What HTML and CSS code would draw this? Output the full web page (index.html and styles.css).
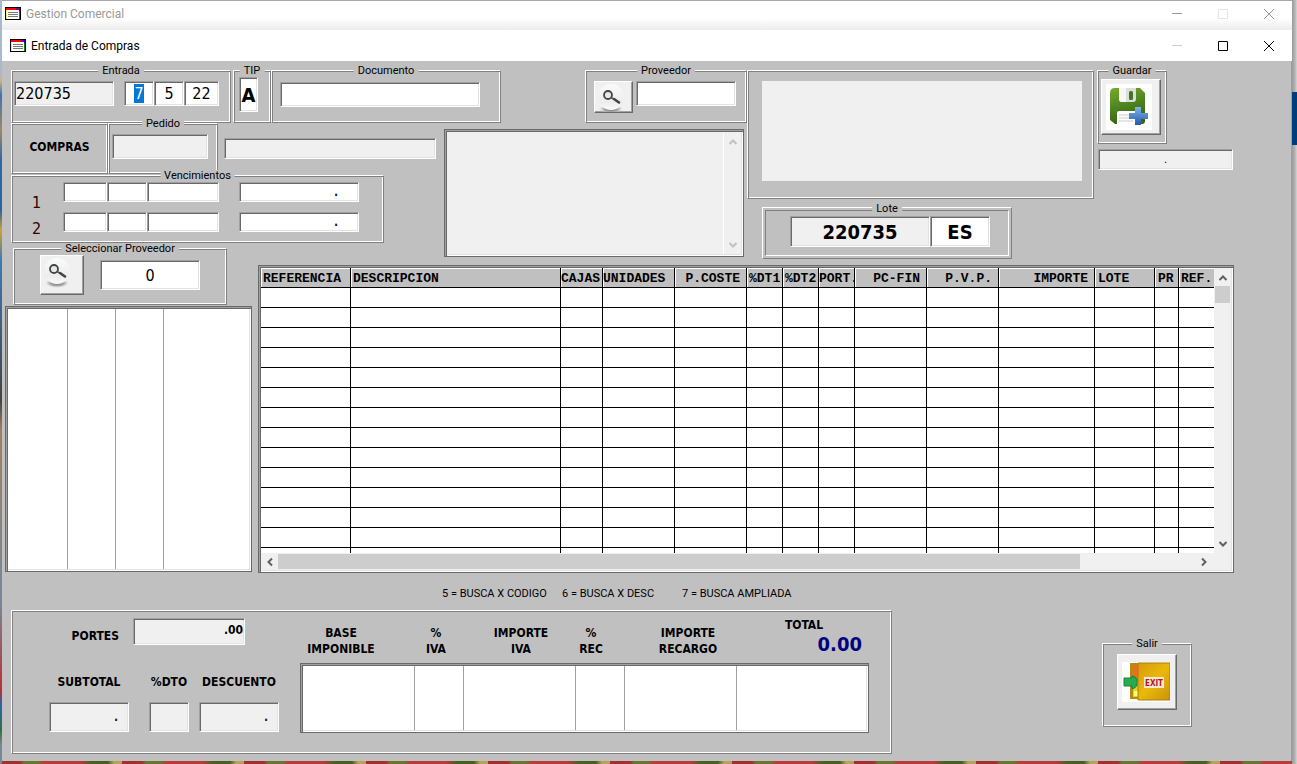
FILE: index.html
```html
<!DOCTYPE html>
<html lang="es">
<head>
<meta charset="utf-8">
<title>Gestion Comercial</title>
<link rel="stylesheet" href="styles.css">
</head>
<body>
<svg class="defs" aria-hidden="true">
  <defs>
    <linearGradient id="ball" x1="0" y1="0" x2="0" y2="1"><stop offset="0" stop-color="#fbfbfb"/><stop offset=".7" stop-color="#ececec"/><stop offset="1" stop-color="#fafafa"/></linearGradient>
    <radialGradient id="shade"><stop offset="0" stop-color="#777"/><stop offset=".6" stop-color="#aaa"/><stop offset="1" stop-color="#ddd" stop-opacity="0"/></radialGradient>
    <symbol id="lens" viewBox="0 0 28 32">
      <ellipse cx="13" cy="25" rx="12" ry="5" fill="url(#shade)"/>
      <circle cx="13" cy="13" r="13" fill="url(#ball)"/>
      <circle cx="10" cy="11" r="4" fill="#e4e8ea" stroke="#444" stroke-width="1.800"/>
      <path d="M13 13.500l3.500 2" stroke="#555" stroke-width="1.600"/>
      <path d="M16 15l5 3.500" stroke="#444" stroke-width="2.600" stroke-linecap="round"/>
    </symbol>
    <symbol id="app" viewBox="0 0 16 13">
      <path d="M0 0h16v13H0z" fill="#000"/><path d="M1 3h13v9H1z" fill="#fff"/><path d="M1 1h10v2H1z" fill="#f00"/><path d="M11 1h3v2h-3z" fill="#808"/><path d="M14 1h1v3h-1z" fill="#00f"/><path d="M14 4h1v8h-1z" fill="#080"/><path d="M1 3h1v9H1z" fill="#ee6"/>
      <path d="M3 5.500h10M3 7.500h10M3 9.500h10" stroke="#777"/>
    </symbol>
    <symbol id="min" viewBox="0 0 12 12"><path d="M1 5.500h10" stroke="currentColor"/></symbol>
    <symbol id="max" viewBox="0 0 12 12"><path d="M1.500 1.500h9v9h-9z" fill="none" stroke="currentColor"/></symbol>
    <symbol id="close" viewBox="0 0 12 12"><path d="M1 1l10 10M11 1L1 11" stroke="currentColor"/></symbol>
    <symbol id="up" viewBox="0 0 10 10"><path d="M1.500 7L5 3.500 8.500 7" fill="none" stroke="currentColor" stroke-width="2"/></symbol>
    <symbol id="down" viewBox="0 0 10 10"><path d="M1.500 3L5 6.500 8.500 3" fill="none" stroke="currentColor" stroke-width="2"/></symbol>
    <symbol id="left" viewBox="0 0 10 10"><path d="M7 1.500L3.500 5 7 8.500" fill="none" stroke="currentColor" stroke-width="2"/></symbol>
    <symbol id="right" viewBox="0 0 10 10"><path d="M3 1.500L6.500 5 3 8.500" fill="none" stroke="currentColor" stroke-width="2"/></symbol>
  </defs>
</svg>
<div class="window">
  <header class="titlebar titlebar-back">
    <svg class="app-icon"><use href="#app"/></svg><span class="title">Gestion Comercial</span>
    <button aria-label="Minimizar ventana principal"><svg><use href="#min"/></svg></button>
    <button class="off" aria-label="Maximizar ventana principal"><svg><use href="#max"/></svg></button>
    <button aria-label="Cerrar ventana principal"><svg><use href="#close"/></svg></button>
  </header>
  <header class="titlebar">
    <svg class="app-icon"><use href="#app"/></svg><h1 class="title">Entrada de Compras</h1>
    <button class="off" aria-label="Minimizar"><svg><use href="#min"/></svg></button>
    <button aria-label="Maximizar"><svg><use href="#max"/></svg></button>
    <button aria-label="Cerrar"><svg><use href="#close"/></svg></button>
  </header>

  <main class="client">
    <div class="work">
      <section class="head">
        <div class="head-row">
          <fieldset class="group entrada"><legend>Entrada</legend>
            <input class="field w100 muted" aria-label="Entrada" value="220735" readonly>
            <div class="date">
              <input class="field w30 center selected" aria-label="Día" value="7">
              <input class="field w30 center" aria-label="Mes" value="5">
              <input class="field w35 center" aria-label="Año" value="22">
            </div>
          </fieldset>
          <fieldset class="group tip"><legend>TIP</legend><input class="field" aria-label="TIP" value="A"></fieldset>
          <fieldset class="group documento"><legend>Documento</legend><input class="field w200" aria-label="Documento"></fieldset>
          <fieldset class="group proveedor"><legend>Proveedor</legend>
            <button class="push find" aria-label="Buscar proveedor"><svg><use href="#lens"/></svg></button>
            <input class="field w100" aria-label="Proveedor">
          </fieldset>
        </div>
        <div class="head-row">
          <div class="head-left">
            <div class="order-row">
              <div class="group compras">COMPRAS</div>
              <fieldset class="group pedido"><legend>Pedido</legend><input class="field muted" aria-label="Pedido" readonly></fieldset>
              <input class="field muted order-name" aria-label="Nombre" readonly>
            </div>
            <fieldset class="group vencimientos"><legend>Vencimientos</legend>
              <div class="numbers"><span>1</span><span>2</span></div>
              <div class="due-rows">
                <div class="due"><input class="field" aria-label="Día vencimiento 1"><input class="field" aria-label="Mes vencimiento 1"><input class="field" aria-label="Año vencimiento 1"><input class="field amount" aria-label="Importe vencimiento 1" value="."></div>
                <div class="due"><input class="field" aria-label="Día vencimiento 2"><input class="field" aria-label="Mes vencimiento 2"><input class="field" aria-label="Año vencimiento 2"><input class="field amount" aria-label="Importe vencimiento 2" value="."></div>
              </div>
            </fieldset>
          </div>
          <div class="well notes">
            <textarea aria-label="Observaciones" readonly></textarea>
            <div class="vscroll faint"><svg><use href="#up"/></svg><svg><use href="#down"/></svg></div>
          </div>
        </div>
      </section>

      <section class="supplier">
        <div class="group supplier-box"><div class="blank"></div></div>
        <div class="lote-outer">
          <fieldset class="lote"><legend>Lote</legend>
            <input class="field muted lote-num" aria-label="Lote" value="220735" readonly><input class="field lote-country" aria-label="País" value="ES">
          </fieldset>
        </div>
      </section>

      <section class="save">
        <fieldset class="group guardar"><legend>Guardar</legend>
          <button class="push big" aria-label="Guardar">
            <svg width="46" height="46" viewBox="0 0 46 46">
              <defs><linearGradient id="disk" x1="0" y1="0" x2=".3" y2="1"><stop offset="0" stop-color="#78aa2d"/><stop offset=".55" stop-color="#4d8420"/><stop offset="1" stop-color="#386511"/></linearGradient>
              <linearGradient id="plus" x1="0" y1="0" x2="0" y2="1"><stop offset="0" stop-color="#82b4e6"/><stop offset="1" stop-color="#2458ae"/></linearGradient></defs>
              <path d="M0 0h46v46H0z" fill="#fff"/>
              <path d="M9 4h25l5 5v28q0 3-3 3H9l-5-4V9q0-5 5-5z" fill="url(#disk)"/>
              <path d="M13 4h17v11q0 3-3 3H16q-3 0-3-3z" fill="#ddd"/><path d="M13 4h7v14h-4q-3 0-3-3z" fill="#f6f6f6"/><rect x="23" y="7" width="4" height="9" rx="1.500" fill="#3f7818"/>
              <path d="M11 40V29q0-2 2-2h17q2 0 2 2v11z" fill="#fff"/><path d="M13 31h14M13 34h14M13 37h14" stroke="#ccc"/>
              <path d="M29 23h6v6h7v6h-7v6h-6v-6h-6v-6h6z" fill="url(#plus)"/>
            </svg>
          </button>
        </fieldset>
        <input class="field muted status" aria-label="Estado" value="." readonly>
      </section>

      <section class="picker">
        <fieldset class="group select-supplier"><legend>Seleccionar Proveedor</legend>
          <button class="push find find-large" aria-label="Seleccionar proveedor"><svg><use href="#lens"/></svg></button>
          <input class="field center" aria-label="Código de proveedor" value="0">
        </fieldset>
        <div class="well list"><span></span><span></span><span></span><span></span></div>
      </section>

      <section class="well sheet">
        <div class="sheet-view">
          <table class="lines">
            <colgroup><col class="c90"><col class="c210"><col class="c42"><col class="c72"><col class="c72"><col class="c36"><col class="c36"><col class="c36"><col class="c72"><col class="c72"><col class="c96"><col class="c60"><col class="c24"><col class="c36"></colgroup>
            <thead><tr><th>REFERENCIA</th><th>DESCRIPCION</th><th class="tight">CAJAS</th><th class="tight">UNIDADES</th><th class="num">P.COSTE</th><th>%DT1</th><th>%DT2</th><th class="tight">PORT.</th><th class="num">PC-FIN</th><th class="num">P.V.P.</th><th class="num">IMPORTE</th><th class="wide">LOTE</th><th class="wide">PR</th><th>REF.</th></tr></thead>
            <tbody>
              <tr><td><td><td><td><td><td><td><td><td><td><td><td><td><td></tr>
              <tr><td><td><td><td><td><td><td><td><td><td><td><td><td><td></tr>
              <tr><td><td><td><td><td><td><td><td><td><td><td><td><td><td></tr>
              <tr><td><td><td><td><td><td><td><td><td><td><td><td><td><td></tr>
              <tr><td><td><td><td><td><td><td><td><td><td><td><td><td><td></tr>
              <tr><td><td><td><td><td><td><td><td><td><td><td><td><td><td></tr>
              <tr><td><td><td><td><td><td><td><td><td><td><td><td><td><td></tr>
              <tr><td><td><td><td><td><td><td><td><td><td><td><td><td><td></tr>
              <tr><td><td><td><td><td><td><td><td><td><td><td><td><td><td></tr>
              <tr><td><td><td><td><td><td><td><td><td><td><td><td><td><td></tr>
              <tr><td><td><td><td><td><td><td><td><td><td><td><td><td><td></tr>
              <tr><td><td><td><td><td><td><td><td><td><td><td><td><td><td></tr>
              <tr><td><td><td><td><td><td><td><td><td><td><td><td><td><td></tr>
              <tr><td><td><td><td><td><td><td><td><td><td><td><td><td><td></tr>
            </tbody>
          </table>
        </div>
        <div class="vscroll"><svg><use href="#up"/></svg><i class="thumb"></i><svg><use href="#down"/></svg></div>
        <div class="hscroll"><svg><use href="#left"/></svg><i class="thumb"></i><svg><use href="#right"/></svg></div>
      </section>
    </div>

    <p class="hints"><span>5 = BUSCA X CODIGO</span><span>6 = BUSCA X DESC</span><span>7 = BUSCA AMPLIADA</span></p>

    <div class="foot">
      <section class="group totals">
        <div class="sums">
          <div class="portes"><label for="portes">PORTES</label><input class="field muted" id="portes" value=".00" readonly></div>
          <div class="sum-row">
            <div class="sum"><label for="subtotal">SUBTOTAL</label><input class="field muted" id="subtotal" value="." readonly></div>
            <div class="sum sum-small"><label for="dto">%DTO</label><input class="field muted" id="dto" readonly></div>
            <div class="sum"><label for="descuento">DESCUENTO</label><input class="field muted" id="descuento" value="." readonly></div>
          </div>
        </div>
        <div class="taxes">
          <div class="tax-head">
            <span>BASE<br>IMPONIBLE</span><span>%<br>IVA</span><span>IMPORTE<br>IVA</span><span>%<br>REC</span><span>IMPORTE<br>RECARGO</span>
            <div class="total"><span>TOTAL</span><output>0.00</output></div>
          </div>
          <div class="well tax-list"><span></span><span></span><span></span><span></span><span></span><span></span></div>
        </div>
      </section>
      <fieldset class="group salir"><legend>Salir</legend>
        <button class="push big" aria-label="Salir">
          <svg width="48" height="40" viewBox="0 0 48 40">
            <defs><linearGradient id="door" x1="0" y1="0" x2="1" y2="1"><stop offset="0" stop-color="#d59a0b"/><stop offset=".5" stop-color="#eab80c"/><stop offset="1" stop-color="#cb920b"/></linearGradient></defs>
            <path d="M0 0h48v40H0z" fill="#fff"/><path d="M8 1h10v36H8z" fill="#b88a14"/><path d="M11 4h6v15h-6z" fill="#f26a20"/><path d="M11 19h6v16h-6z" fill="#f0ca30"/><path d="M12 29h4v5h-4z" fill="#ffff78"/>
            <path d="M16 1h32v37H16z" fill="url(#door)" stroke="#a9800f"/>
            <path d="M2 16h8v-2q4 0 5 4v5q-1 3-5 4v-3H2z" fill="#2aaa50" stroke="#16843a"/>
            <path d="M22 15h20v11H22z" fill="#f5ead0"/><text class="exit" x="32" y="24" text-anchor="middle">EXIT</text>
          </svg>
        </button>
      </fieldset>
    </div>
  </main>
</div>
</body>
</html>
```
FILE: styles.css
```css
* { box-sizing: border-box; }
body {
  margin: 0;
  display: flex;
  min-height: 100vh;
  padding: 0 5px 3px 2px;
  font-family: "DejaVu Sans Condensed", "DejaVu Sans", sans-serif;
  font-size: 12px;
  color: #000;
  background:
    linear-gradient(90deg, #999, #b5b5b5 60%, #d4d4d4) right 0 top 0 / 5px 92px no-repeat,
    linear-gradient(#003c7c, #003c7c) right 0 top 92px / 5px 53px no-repeat,
    linear-gradient(90deg, #999, #b5b5b5 60%, #d4d4d4) right 0 top 145px / 5px 100% no-repeat,
    linear-gradient(#aab8cc 75px, #d0b480 80px, #3e73ae 95px, #a08868 130px, #2e66a6 160px, #2d629f 210px, #d0a030 230px, #3f79b5 260px, #444 400px, #a08060 430px, #789 600px, #b83030 690px, #2f62b0 705px, #2f7040 730px, #789 745px) 0 0 / 2px 100% no-repeat,
    repeating-linear-gradient(90deg, #a23032 0 20px, #6b7630 24px 38px, #bb3a3a 44px 80px, #4a6022 90px 108px, #b9a25a 114px 122px) 0 100% / 100% 3px no-repeat;
}
.defs { position: absolute; width: 0; height: 0; }
.window { flex: 1; display: flex; flex-direction: column; min-width: 0; }
.titlebar { display: flex; align-items: center; height: 31px; padding-left: 8px; background: #fff; font-family: Roboto, sans-serif; }
.titlebar-back { height: 30px; padding: 0 0 4px 3px; color: #999; background: linear-gradient(#fff 60%, #ececec); border-top: 1px solid #a7a7a7; }
.app-icon { width: 16px; height: 13px; margin-right: 5px; }
.title { flex: 1; margin: 0; font-size: 12px; font-weight: 400; }
.titlebar button { display: flex; justify-content: center; width: 46px; padding: 0; border: 0; background: none; color: inherit; }
.titlebar button svg { width: 12px; height: 12px; }
.titlebar .off { color: #ccc; }
.titlebar-back .off { color: #e4e4e4; }

.client { flex: 1; padding: 9px 0 7px 3px; background: #c0c0c0; border-right: 1px solid #a0a0a0; }
.work { display: grid; grid-template-columns: 253px 489px 350px 1fr; grid-template-rows: 178px 17px 308px; }
.head { grid-area: 1 / 1 / 3 / 3; padding-left: 6px; }
.supplier { grid-area: 1 / 3 / 3 / 4; }
.save { grid-area: 1 / 4 / 3 / 5; }
.picker { grid-area: 2 / 1 / 4 / 2; display: flex; flex-direction: column; padding: 0 6px 1px 0; }
.sheet { grid-area: 3 / 2 / 4 / 5; margin-right: 57px; }

.group {
  position: relative;
  display: flex;
  align-items: flex-start;
  min-width: 0;
  margin: 0;
  padding: 10px 0 0;
  border: 1px solid;
  border-color: #fff #808080 #808080 #fff;
  box-shadow: inset 1px 1px #808080, inset -1px -1px #fff;
}
legend {
  position: absolute;
  top: -6px;
  left: 50%;
  transform: translateX(-50%);
  padding: 0 4px;
  background: #c0c0c0;
  font: 11px/12px Roboto, sans-serif;
  white-space: nowrap;
}
.field {
  height: 25px;
  min-width: 0;
  margin: 0;
  padding: 0 1px;
  border: 1px solid;
  border-color: #a0a0a0 #fff #fff #a0a0a0;
  border-radius: 0;
  box-shadow: inset 1px 1px #696969, inset -1px -1px #e3e3e3;
  background-color: #fff;
  font-family: inherit;
  font-size: 16px;
  color: #000;
}
.muted { background-color: #f0f0f0; }
.center { text-align: center; }
.w30 { width: 30px; }
.w35 { width: 35px; }
.w100 { width: 100px; }
.w200 { width: 200px; }
.push {
  display: flex;
  align-items: center;
  justify-content: flex-start;
  padding: 0 0 0 4px;
  border: 1px solid;
  border-color: #fff #696969 #696969 #fff;
  box-shadow: inset -1px -1px #a0a0a0;
  background: #f0f0f0;
}
.well {
  border: 1px solid #696969;
  box-shadow: inset 1px 1px #a0a0a0, inset 2px 2px #696969, inset -1px -1px #fff, inset -2px -2px #e3e3e3;
  padding: 2px;
  background: #fff;
}

.head-row { display: flex; align-items: flex-start; }
.entrada { width: 220px; height: 53px; padding-left: 2px; gap: 10px; margin-right: 2px; }
.date { display: flex; }
.selected { color: #fff; background: #fff linear-gradient(#0078d7, #0078d7) center / 10px 19px no-repeat; }
.tip { width: 38px; height: 53px; padding: 6px 0 0 5px; }
.tip .field { width: 19px; height: 35px; padding: 0; font-size: 20px; font-weight: 700; text-align: center; }
.documento { width: 230px; height: 53px; padding: 11px 0 0 8px; }
.proveedor { width: 162px; height: 53px; margin-left: auto; padding-left: 8px; gap: 3px; }
.find { width: 39px; height: 32px; padding: 2px 0 0 3px; align-items: flex-start; overflow: hidden; }
.find svg { flex: none; width: 28px; height: 32px; }

.head-left { width: 433px; }
.order-row { display: flex; }
.compras { width: 97px; height: 51px; padding: 0 0 4px; align-items: center; justify-content: center; font-weight: 700; }
.pedido { width: 110px; height: 51px; padding-left: 3px; }
.pedido .field { width: 96px; }
.order-name { width: 212px; height: 21px; margin: 15px 0 0 6px; }
.vencimientos { width: 373px; height: 68px; margin-top: 1px; padding: 6px 0 0 20px; }
.numbers { display: grid; width: 31px; padding-top: 8px; font-size: 16px; line-height: 26px; color: #300; }
.due-rows { display: grid; gap: 10px; }
.due { display: grid; grid-template-columns: 44px 40px 72px 140px; }
.due .field { height: 20px; }
.due .amount { margin-left: 20px; padding-right: 20px; }
.due .amount, .sum .field { text-align: right; color: #024; font-size: 12px; font-weight: 700; }
.notes { display: flex; width: 300px; height: 128px; margin-top: 6px; background: #f0f0f0; }
.notes textarea { flex: 1; min-width: 0; margin: 1px 0 0 1px; border: 0; border-right: 1px solid #fff; background: none; resize: none; outline: 0; }

.supplier-box { width: 347px; height: 129px; padding: 10px 11px 0 14px; }
.blank { flex: 1; height: 100px; background: #f0f0f0; }
.lote-outer { width: 250px; margin: 8px 0 0 15px; padding: 2px; border: 1px solid; border-color: #fff #808080 #808080 #fff; }
.lote { position: relative; display: flex; height: 46px; margin: 0; padding: 5px 0 0 24px; border: 1px solid; border-color: #808080 #fff #fff #808080; }
.lote legend { top: -8px; }
.lote .field { height: 31px; font-size: 20px; font-weight: 700; text-align: center; }
.lote .lote-num { width: 140px; }
.lote .lote-country { width: 60px; }

.guardar { width: 70px; height: 74px; padding: 8px 0 0 3px; }
.big { width: 60px; height: 56px; }
.status { display: block; width: calc(100% - 59px); height: 21px; margin: 5px 0 0 1px; text-align: center; font-size: 11px; }

.select-supplier { height: 57px; width: 214px; margin: 0 0 1px 8px; padding: 6px 0 0 26px; }
.find-large { width: 44px; height: 40px; margin-right: 16px; }
.select-supplier .field { width: 100px; height: 30px; margin-top: 5px; }
.list { flex: 1; display: grid; grid-template-columns: 60px 48px 48px 1fr; }
.list span, .tax-list span { border-right: 1px solid #a0a0a0; }
.list span:last-child, .tax-list span:last-child { border: 0; }

.sheet { display: grid; grid-template-columns: 1fr 17px; grid-template-rows: 1fr 17px; }
.sheet-view { overflow: hidden; min-width: 0; min-height: 0; }
.lines { width: 954px; table-layout: fixed; border-collapse: separate; border-spacing: 0; }
.c24 { width: 24px; } .c36 { width: 36px; } .c42 { width: 42px; } .c60 { width: 60px; }
.c72 { width: 72px; } .c90 { width: 90px; } .c96 { width: 96px; } .c210 { width: 210px; }
.lines th, .lines td { height: 20px; padding: 0; border-right: 1px solid #000; border-bottom: 1px solid #000; overflow: hidden; }
.lines th:last-child, .lines td:last-child { border-right: 0; }
.lines th { background: #c0c0c0; box-shadow: inset 1px 1px #fff; padding: 3px 0 0 2px; font: 700 13px/16px "Liberation Mono", monospace; text-align: left; white-space: nowrap; }
.lines .tight { padding-left: 0; }
.lines .wide { padding-left: 3px; }
.lines .num { text-align: right; padding-right: 6px; }
.vscroll { display: flex; flex-direction: column; align-items: center; justify-content: space-between; width: 17px; padding: 5px 0 4px; background: #f0f0f0; color: #606060; }
.vscroll svg, .hscroll svg { width: 10px; height: 10px; flex: none; }
.vscroll .thumb { width: 15px; height: 17px; margin: 3px 0 auto; background: #cdcdcd; }
.faint { color: #c0c0c0; }
.hscroll { grid-column: 1 / -1; display: flex; align-items: center; padding: 0 22px 0 4px; background: #f0f0f0; color: #606060; }
.hscroll .thumb { width: 85%; height: 15px; margin: 0 auto 0 3px; background: #cdcdcd; }

.hints { display: flex; margin: 0; padding: 13px 0 9px 437px; font: 11px/15px Roboto, sans-serif; }
.hints span { width: 120px; white-space: nowrap; }
.foot { display: flex; align-items: flex-start; justify-content: space-between; padding: 0 99px 0 6px; }
.totals { width: 881px; height: 144px; padding: 0 0 0 37px; font-weight: 700; }
.totals .field { font-size: 12px; }
.sums { width: 251px; padding-top: 7px; }
.portes { display: flex; justify-content: flex-end; align-items: center; gap: 14px; padding-right: 55px; }
.portes label { padding-top: 8px; }
.portes .field { width: 112px; height: 27px; padding-bottom: 4px; text-align: right; font-weight: 700; }
.sum-row { display: flex; margin-top: 30px; }
.sum { display: grid; grid-template-columns: 80px; justify-items: center; gap: 12px; line-height: 15px; }
.sum-small { grid-template-columns: 40px; margin: 0 10px 0 20px; }
.sum .field { width: 100%; height: 30px; padding-right: 10px; }
.taxes { width: 569px; padding-top: 6px; }
.tax-head { display: grid; grid-template-columns: 82px 108px 62px 78px 116px 116px; height: 46px; text-align: center; line-height: 16px; }
.tax-head > span { padding-top: 8px; }
.total { display: grid; align-content: start; grid-template-rows: 16px 22px; }
.total output { text-align: right; font-size: 20px; line-height: 22px; color: #000080; }
.tax-list { display: grid; grid-template-columns: 112px 49px 112px 49px 112px 1fr; height: 70px; }
.salir { width: 90px; height: 84px; margin-top: 33px; padding: 10px 0 0 14px; }
.exit { font: 700 8px "DejaVu Sans Condensed", sans-serif; fill: #b81420; }
```
